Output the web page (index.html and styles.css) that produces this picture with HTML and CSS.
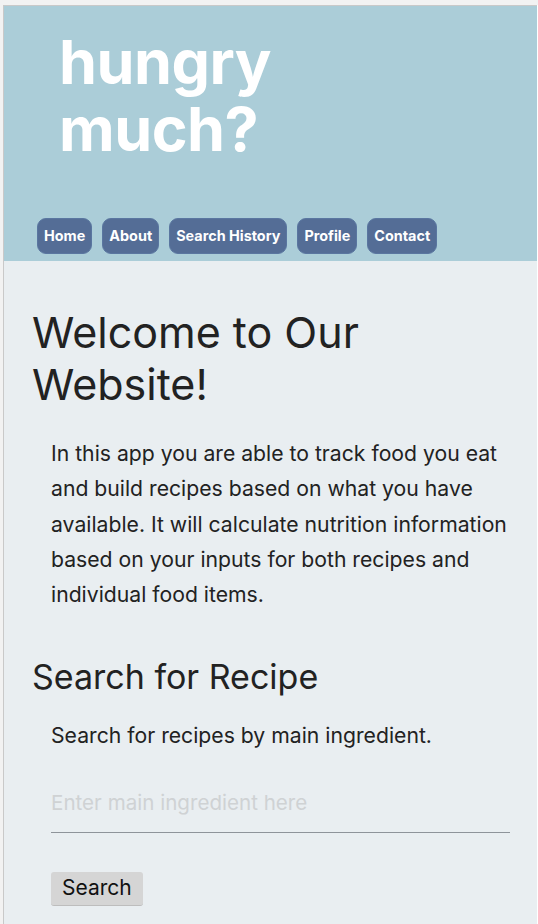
FILE: index.html
```html
<!DOCTYPE html>
<html lang="en">
<head>
<meta charset="utf-8">
<title>hungry much?</title>
<link rel="stylesheet" href="styles.css">
</head>
<body>
<div class="window">
  <header class="site-header">
    <h1 class="logo">hungry<br>much?</h1>
    <nav class="nav">
      <a class="nav-btn" href="#">Home</a>
      <a class="nav-btn" href="#">About</a>
      <a class="nav-btn" href="#">Search History</a>
      <a class="nav-btn" href="#">Profile</a>
      <a class="nav-btn" href="#">Contact</a>
    </nav>
  </header>
  <main class="content">
    <h2 class="welcome">Welcome to Our Website!</h2>
    <p class="intro">In this app you are able to track food you eat and build recipes based on what you have available. It will calculate nutrition information based on your inputs for both recipes and individual food items.</p>
    <h3 class="section-title">Search for Recipe</h3>
    <p class="section-text">Search for recipes by main ingredient.</p>
    <form class="search-form">
      <input class="search-input" type="text" placeholder="Enter main ingredient here">
      <button class="search-btn" type="button">Search</button>
    </form>
  </main>
</div>
</body>
</html>
```
FILE: styles.css
```css
html, body {
  margin: 0;
  padding: 0;
  background: #ffffff;
}
body {
  border-top: 5px solid #f2f2f2;
  border-left: 3px solid #f2f2f2;
  height: 919px;
  overflow: hidden;
  font-family: Inter, "Liberation Sans", sans-serif;
}
.window {
  margin-right: 1px;
  border-top: 1px solid #c9c9c9;
  border-left: 1px solid #c9c9c9;
  background: #e9eef1;
  height: 100%;
}
.site-header {
  background: #abcdd8;
  padding: 23px 0 7px 33px;
}
.logo {
  margin: 0 0 55px 22px;
  color: #ffffff;
  font-size: 61px;
  font-weight: 700;
  line-height: 67px;
  letter-spacing: -0.5px;
}
.nav {
  display: flex;
  gap: 10px;
}
.nav-btn {
  display: block;
  background: #546d96;
  color: #ffffff;
  font-size: 14.4px;
  font-weight: 700;
  text-decoration: none;
  padding: 8px 6px 9px;
  border-radius: 9px;
  border: 1px solid #5a76a0;
  line-height: 17px;
}
.content {
  padding: 1px 20px 0 28px;
  color: #222222;
}
.welcome {
  margin: 44px 0 0 0;
  font-size: 43px;
  font-weight: 400;
  line-height: 52px;
}
.intro {
  margin: 26px 0 0 19px;
  font-size: 21.2px;
  line-height: 35.3px;
}
.section-title {
  margin: 44px 0 0 0;
  font-size: 34px;
  font-weight: 400;
  line-height: 42px;
}
.section-text {
  margin: 23px 0 0 19px;
  font-size: 21.2px;
  line-height: 28px;
}
.search-form {
  margin: 38px 0 0 19px;
  display: flex;
  flex-direction: column;
  align-items: flex-start;
}
.search-input {
  width: 459px;
  box-sizing: border-box;
  background: transparent;
  border: none;
  border-bottom: 1px solid #8e949a;
  padding: 3px 0 17px;
  font-family: Inter, "Liberation Sans", sans-serif;
  font-size: 20.6px;
  color: #222;
  outline: none;
}
.search-input::placeholder {
  color: #cfd2d4;
}
.search-btn {
  margin-top: 39px;
  background: #d5d5d5;
  border: none;
  border-bottom: 1px solid #bdbdbd;
  border-radius: 3px;
  padding: 3px 11px 4px;
  font-family: Inter, "Liberation Sans", sans-serif;
  font-size: 21px;
  color: #111;
  line-height: 26px;
}
```
